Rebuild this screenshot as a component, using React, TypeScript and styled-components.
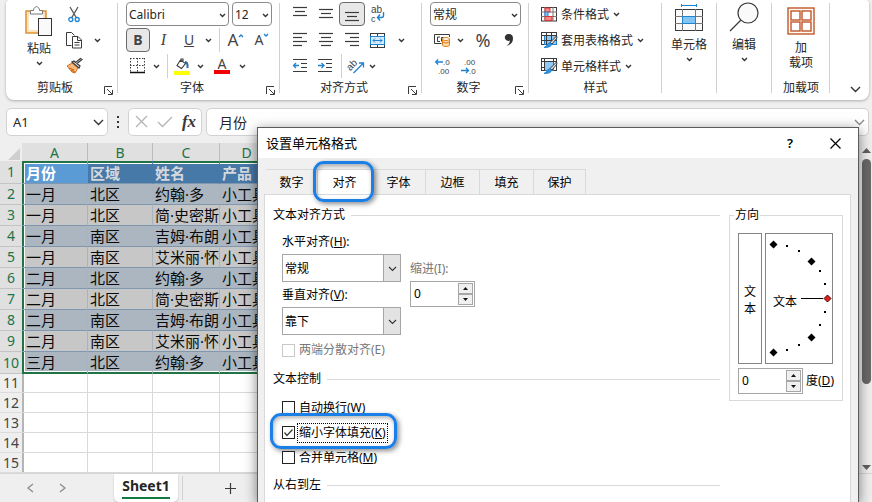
import React from "react";
import styled, { createGlobalStyle, css } from "styled-components";

const Global = createGlobalStyle`
  * { box-sizing: border-box; }
  html, body { margin: 0; height: 100%; }
  body, button, input, select {
    font-family: "Noto Sans", "Noto Sans CJK SC", sans-serif;
    font-size: 12px;
    color: #262626;
  }
  button { background: none; border: 0; padding: 0; }
  svg { display: block; flex: none; overflow: visible; }
`;

const Window = styled.div`
  position: relative;
  min-height: 100vh;
  background: #efefef;
  overflow: hidden;
  display: flex;
  flex-direction: column;
`;

/* ---------- ribbon ---------- */

const Ribbon = styled.header`
  display: flex;
  height: 100px;
  margin: 0 3px 0 6px;
  background: #fff;
  border-radius: 4px 4px 8px 8px;
  box-shadow: 0 1px 3px rgba(0, 0, 0, 0.28);
`;

const Group = styled.section<{ $width: number; $pad?: number }>`
  display: flex;
  flex-direction: column;
  flex: none;
  width: ${(p) => p.$width}px;
  padding: 1px 0 0 ${(p) => p.$pad ?? 0}px;
  position: relative;
  &::after {
    content: "";
    position: absolute;
    right: 0;
    top: 3px;
    bottom: 7px;
    width: 1px;
    background: #d0d0d0;
  }
`;

const GroupBody = styled.div`
  display: flex;
  height: 78px;
`;

const Rows = styled.div`
  display: flex;
  flex-direction: column;
`;

const Row = styled.div`
  display: flex;
  align-items: center;
  height: 26px;
`;

const GroupFooter = styled.div<{ $outdent?: number }>`
  display: flex;
  align-items: center;
  height: 18px;
  margin-left: -${(p) => p.$outdent ?? 0}px;
`;

const GroupName = styled.span`
  flex: 1;
  text-align: center;
  line-height: 18px;
`;

const Launcher = styled.button`
  width: 14px;
  height: 14px;
  display: flex;
  align-items: flex-end;
`;

const Tool = styled.button<{ $w: number; $active?: boolean }>`
  display: flex;
  align-items: center;
  justify-content: center;
  width: ${(p) => p.$w}px;
  height: 24px;
  ${(p) =>
    p.$active &&
    css`
      background: #e8e8e8;
      border: 1px solid #6b6b6b;
      border-radius: 4px;
    `}
`;

const Glyph = styled.span<{ $size: number; $bold?: boolean }>`
  font-size: ${(p) => p.$size}px;
  line-height: 20px;
  font-weight: ${(p) => (p.$bold ? 700 : 400)};
  color: #444;
`;

const Italic = styled(Glyph)`
  font-family: "Liberation Serif", serif;
  font-style: italic;
`;

const Divider = styled.i`
  width: 1px;
  height: 24px;
  margin: 0 4px;
  background: #d0d0d0;
`;

const BigTool = styled.button<{ $w: number }>`
  display: flex;
  flex-direction: column;
  align-items: center;
  width: ${(p) => p.$w}px;
  line-height: 15px;
`;

const BigIcon = styled.span<{ $h: number }>`
  display: flex;
  align-items: flex-end;
  height: ${(p) => p.$h}px;
  margin-bottom: 5px;
`;

const BigChevron = styled.span`
  display: flex;
  height: 14px;
  align-items: center;
`;

const StyleTool = styled.button`
  display: flex;
  align-items: center;
  gap: 4px;
  height: 26px;
  padding-left: 12px;
`;

const Tail = styled.div`
  flex: 1;
  display: flex;
  align-items: flex-end;
  justify-content: flex-end;
  padding: 0 8px 8px 0;
`;

const ComboBox = styled.div<{ $w: number; $gap?: number }>`
  position: relative;
  width: ${(p) => p.$w}px;
  margin-right: ${(p) => p.$gap ?? 0}px;
  select {
    appearance: none;
    display: block;
    width: 100%;
    height: 24px;
    padding: 0 2px;
    background: #fff;
    border: 1px solid #8a8a8a;
    border-radius: 4px;
  }
  svg {
    position: absolute;
    right: 3px;
    top: 10px;
    pointer-events: none;
  }
`;

/* ---------- formula bar ---------- */

const FormulaBar = styled.div`
  display: flex;
  align-items: center;
  height: 43px;
  padding: 0 3px 0 6px;
`;

const BarBox = styled.div<{ $w?: number }>`
  display: flex;
  align-items: center;
  ${(p) => (p.$w ? `flex: none; width: ${p.$w}px;` : "flex: 1; margin-left: 4px;")}
  height: 28px;
  background: #fff;
  border: 1px solid #d2d2d2;
  border-radius: 5px;
`;

const BarInput = styled.input<{ $size: number; $pad: number }>`
  flex: 1;
  min-width: 0;
  height: 24px;
  padding: 0 0 0 ${(p) => p.$pad}px;
  border: 0;
  background: none;
  outline: 0;
  font-size: ${(p) => p.$size}px;
`;

const Grip = styled.span`
  display: flex;
  justify-content: center;
  width: 20px;
`;

const Fx = styled.span`
  font: italic 700 17px/20px "Liberation Serif", serif;
  color: #3a3a3a;
`;

/* ---------- sheet ---------- */

const SheetArea = styled.main`
  display: flex;
  flex: 1;
`;

const Grid = styled.table`
  flex: 1;
  width: 100%;
  table-layout: fixed;
  border-collapse: separate;
  border-spacing: 0;
  background: #fff;
  td,
  th {
    padding: 0;
    overflow: hidden;
    white-space: nowrap;
  }
`;

const Col = styled.col<{ $w?: number }>`
  width: ${(p) => (p.$w ? `${p.$w}px` : "auto")};
`;

const Corner = styled.th`
  height: 18px;
  background: #efefef;
  svg { margin: 4px 0 0 8px; }
`;

const ColHead = styled.th`
  height: 18px;
  background: #e0e0e0;
  border-right: 1px solid #bcbcbc;
  color: #217346;
  font-size: 14px;
  font-weight: 400;
  line-height: 17px;
`;

const RowHead = styled.th<{ $sel?: boolean; $h: number }>`
  height: ${(p) => p.$h}px;
  background: ${(p) => (p.$sel ? "#e0e0e0" : "#efefef")};
  color: ${(p) => (p.$sel ? "#217346" : "#444")};
  border-bottom: 1px solid ${(p) => (p.$sel ? "#c4c4c4" : "#dcdcdc")};
  font-size: 14px;
  font-weight: 400;
  line-height: 18px;
`;

const DataCell = styled.td<{ $shade: string; $first: boolean; $top: boolean; $end: boolean }>`
  background: ${(p) => p.$shade};
  border-bottom: 1px solid ${(p) => (p.$end ? "#217346" : "#7f98b0")};
  border-right: 1px solid ${(p) => (p.$top ? p.$shade : "#a9b4bf")};
  color: ${(p) => (p.$top ? (p.$first ? "#fff" : "#d5d8dc") : "#0a0a0a")};
  font-size: 15px;
  font-weight: ${(p) => (p.$top ? 700 : 400)};
  line-height: 19px;
  && {
    padding-left: ${(p) => (p.$first ? 4 : 2)}px;
    padding-top: ${(p) => (p.$top ? 2 : 0)}px;
  }
  box-shadow: ${(p) =>
    [
      p.$first && "inset 2px 0 #217346",
      p.$top && "inset 0 2px #217346",
      p.$end && "inset 0 -1px #217346",
      p.$first && "inset 3px 0 #fff",
      p.$top && "inset 0 3px #fff",
      p.$end && "inset 0 -2px #fff",
    ]
      .filter(Boolean)
      .join(", ") || "none"};
`;

const EmptyCell = styled.td<{ $first: boolean }>`
  border-right: 1px solid #d9d9d9;
  border-bottom: 1px solid #d9d9d9;
  box-shadow: ${(p) => (p.$first ? "inset 2px 0 #b5b5b5" : "none")};
`;

const ScrollTrack = styled.div`
  display: flex;
  flex-direction: column;
  align-items: center;
  width: 13px;
  padding: 5px 0 3px 1px;
`;

const ScrollThumb = styled.div`
  width: 9px;
  height: 225px;
  margin: 6px 0 auto;
  border-radius: 5px;
  background: #686868;
`;

const SheetBar = styled.nav`
  display: flex;
  align-items: center;
  height: 29px;
  padding-left: 14px;
  border-top: 1px solid #d6d6d6;
`;

const SheetTab = styled.button`
  display: flex;
  align-self: flex-start;
  justify-content: center;
  width: 64px;
  height: 28px;
  margin: 0 0 0 36px;
  background: #fff;
  border-radius: 0 0 5px 5px;
  box-shadow: 0 1px 2px rgba(0, 0, 0, 0.2);
  span {
    height: 25px;
    line-height: 24px;
    font-size: 14px;
    font-weight: 700;
    border-bottom: 2px solid #107c41;
  }
`;

/* ---------- dialog ---------- */

const Dialog = styled.div`
  position: absolute;
  top: 127px;
  left: 257px;
  right: 13px;
  bottom: 0;
  display: flex;
  flex-direction: column;
  background: #f0f0f0;
  border: 1px solid #5c5c5c;
  border-bottom: 0;
  box-shadow: 0 3px 12px rgba(0, 0, 0, 0.5);
  color: #000;
  select, input { color: #000; }
`;

const TitleBar = styled.div`
  display: flex;
  align-items: center;
  flex: none;
  height: 30px;
  padding: 0 16px 0 8px;
  background: #fff;
  h1 { flex: 1; margin: 0; font-size: 13px; font-weight: 400; line-height: 20px; }
`;

const TitleButton = styled.button`
  display: flex;
  align-items: center;
  justify-content: center;
  width: 14px;
  height: 20px;
  margin-left: 31px;
  font-size: 13px;
  font-weight: 600;
  color: #000;
`;

const Tabs = styled.div`
  display: flex;
  flex: none;
  margin: 11px 0 0 8px;
`;

const Tab = styled.button<{ $active?: boolean }>`
  position: relative;
  width: 54px;
  height: 25px;
  line-height: 25px;
  color: #000;
  border-top: 1px solid #d9d9d9;
  border-right: 1px solid #d9d9d9;
  &:first-child,
  &:last-child { width: 52px; }
  ${(p) => p.$active && css`background: #fff;`}
`;

const ring = css`
  content: "";
  position: absolute;
  border: 3px solid #1a7fe6;
  border-radius: 11px;
  box-shadow: 2px 2px 5px rgba(0, 0, 0, 0.45), inset 1px 2px 4px rgba(0, 0, 0, 0.3);
  pointer-events: none;
`;

const RingedTab = styled(Tab)`
  z-index: 1;
  &::after {
    ${ring}
    inset: -9px -3px -8px -5px;
  }
`;

const Panel = styled.div`
  display: flex;
  flex: 1;
  min-height: 0;
  gap: 9px;
  margin: 0 7px 0 6px;
  padding: 10px 7px 0 8px;
  background: #fff;
  border: 1px solid #d9d9d9;
  border-bottom: 0;
`;

const Settings = styled.div`
  flex: 1;
`;

const SectionTitle = styled.h2`
  display: flex;
  align-items: center;
  gap: 6px;
  height: 20px;
  margin: 0;
  font-size: 12px;
  font-weight: 400;
  line-height: 20px;
  &::after { content: ""; flex: 1; height: 1px; background: #d9d9d9; }
`;

const AlignFields = styled.div`
  display: flex;
  gap: 9px;
  padding: 7px 0 0 9px;
`;

const Stack = styled.div<{ $top?: number }>`
  display: flex;
  flex-direction: column;
  gap: 3px;
  padding-top: ${(p) => p.$top ?? 0}px;
`;

const Field = styled.div`
  display: flex;
  flex-direction: column;
  gap: 2px;
`;

const FieldLabel = styled.label<{ $dim?: boolean }>`
  line-height: 20px;
  color: ${(p) => (p.$dim ? "#777" : "#000")};
`;

const Drop = styled.div`
  position: relative;
  width: 119px;
  select {
    appearance: none;
    display: block;
    width: 100%;
    height: 28px;
    padding: 0 2px;
    border: 1px solid #a6a6a6;
    border-radius: 0;
    background: #fff;
  }
  span {
    position: absolute;
    top: 1px;
    right: 1px;
    bottom: 1px;
    width: 17px;
    display: flex;
    align-items: center;
    justify-content: center;
    background: #e3e3e3;
    border-left: 1px solid #a6a6a6;
    pointer-events: none;
  }
`;

const SpinBox = styled.div`
  display: flex;
  width: 65px;
  height: 26px;
  padding: 1px;
  border: 1px solid #a6a6a6;
  background: #fff;
  input {
    flex: 1;
    min-width: 0;
    padding: 0 2px;
    border: 0;
    outline: 0;
    height: 20px;
  }
`;

const SpinButtons = styled.div`
  display: flex;
  flex-direction: column;
  width: 15px;
  button {
    flex: 1;
    display: flex;
    align-items: center;
    justify-content: center;
    background: #f0f0f0;
    border: 1px solid #a6a6a6;
  }
`;

const CheckRow = styled.label<{ $dim?: boolean; $h: number }>`
  position: relative;
  display: flex;
  align-items: center;
  width: max-content;
  height: ${(p) => p.$h}px;
  color: ${(p) => (p.$dim ? "#777" : "#000")};
  input {
    appearance: none;
    width: 13px;
    height: 13px;
    margin: 0 2px 0 0;
    border: 1px solid ${(p) => (p.$dim ? "#c8c8c8" : "#222")};
    background: #fff;
  }
  svg { position: absolute; left: 2px; }
`;

const RingedCheck = styled(CheckRow)`
  &::after {
    ${ring}
    inset: -7px -9px -4px -12px;
  }
`;

const CheckText = styled.span<{ $focus?: boolean }>`
  line-height: 18px;
  padding: 0 1px;
  border: 1px dotted ${(p) => (p.$focus ? "#000" : "transparent")};
`;

const CheckList = styled.div`
  padding: 6px 0 5px 9px;
`;

const DistributeSlot = styled.div`
  margin: 5px 0 9px;
  padding-left: 9px;
`;

const Orientation = styled.fieldset`
  width: 114px;
  height: 196px;
  margin: 0;
  min-width: 0;
  padding: 8px 8px 0;
  border: 1px solid #d9d9d9;
  align-self: flex-start;
  legend {
    margin-left: -4px;
    padding: 0 1px;
    line-height: 20px;
  }
`;

const DialRow = styled.div`
  display: flex;
  gap: 3px;
`;

const Vertical = styled.button`
  display: flex;
  flex-direction: column;
  align-items: center;
  justify-content: center;
  width: 24px;
  height: 131px;
  padding-top: 2px;
  border: 1px solid #858585;
  line-height: 17px;
  color: #000;
`;

const Dial = styled.div`
  width: 68px;
  height: 131px;
  border: 1px solid #858585;
`;

const DegreeRow = styled.div`
  display: flex;
  align-items: center;
  gap: 3px;
  margin-top: 4px;
`;

/* ---------- icons ---------- */

const dark = "#3b3b3b";
const blue = "#1f83cf";

const Chevron = ({ w = 7, color = "#333", s = 1.4 }: { w?: number; color?: string; s?: number }) => (
  <svg width={w} height={w / 2 + 2} viewBox={`0 -1 ${w} ${w / 2 + 2}`} fill="none" stroke={color} strokeWidth={s}>
    <path d={`M1 1L${w / 2} ${w / 2}L${w - 1} 1`} />
  </svg>
);

const Draw = ({ w, h, children }: { w: number; h: number; children: React.ReactNode }) => (
  <svg width={w} height={h} viewBox={`0 0 ${w} ${h}`} fill="none" stroke={dark} strokeWidth="1">
    {children}
  </svg>
);

const LaunchIcon = () => (
  <Draw w={9} h={9}>
    <path d="M.5 8V.5H8M3 3L8 8M8.5 4V8.5H4" />
  </Draw>
);

const PasteIcon = () => (
  <Draw w={28} h={30}>
    <rect x="1" y="5" width="20" height="22" fill="#fbe3bd" stroke="#dc9136" strokeWidth="1.5" />
    <rect x="4" y="8" width="14" height="16" fill="#fff" stroke="none" />
    <path d="M5.5 8V4.5H8.5C8.5 -.5 14.5 -.5 14.5 4.5H17.5V8Z" fill="#fff" stroke="#777" />
    <rect x="13.5" y="12.500" width="13" height="17" fill="#fafafa" stroke="#333" />
  </Draw>
);

const CutIcon = () => (
  <Draw w={12} h={17}>
    <path d="M2 1L8.5 12M10 1L3.5 12" strokeWidth="1.3" stroke="#555" />
    <circle cx="2.8" cy="13.5" r="2" stroke={blue} strokeWidth="1.3" />
    <circle cx="9.2" cy="13.5" r="2" stroke={blue} strokeWidth="1.3" />
  </Draw>
);

const CopyIcon = () => (
  <Draw w={17} h={17}>
    <path d="M5.5 13.5H.5V.5H5.500L8.500 3.500" />
    <path d="M6.5 4.5H12L15.5 8V16H6.5ZM11.5 4.5V8.5H15.5M8.5 10.5H13.5M8.5 13H13.5" fill="#fff" />
  </Draw>
);

const BrushIcon = () => (
  <Draw w={17} h={16}>
    <path d="M1 8L6 5L12 10L9 15L6 14Z" fill="#f8b878" stroke="#d9701c" />
    <path d="M3 10L8 12M5 12L9 14" stroke="#c95f0c" />
    <path d="M6 4L13 10L14 8L11 5.5L16 1.5L14.5 .5L9.5 4.5L8 3Z" fill="#eee" strokeWidth="1.2" />
  </Draw>
);

const BorderIcon = () => (
  <Draw w={16} h={16}>
    <path d="M.5 0V14M7.5 0V14M14.5 0V14M0 .5H15M0 7.5H15" strokeDasharray="1.5 1.5" />
    <path d="M0 14.5H15" strokeWidth="1.5" stroke="#111" />
  </Draw>
);

const BucketIcon = () => (
  <Draw w={17} h={17}>
    <path d="M6.500 2L3 7.500L7.500 10.500L11.500 5.500L6.500 2M9 5V1H7V4" strokeWidth="1.1" />
    <path d="M11 4Q14 4 13.500 10" stroke="#2a6ca8" strokeWidth="2" />
    <rect x="0" y="13" width="16" height="4" fill="#ffff00" stroke="none" />
  </Draw>
);

const FontColorBar = styled.span`
  display: flex;
  flex-direction: column;
  align-items: center;
  width: 16px;
  line-height: 12px;
  font-size: 14px;
  color: #444;
  border-bottom: 4px solid #f00000;
`;

const Lines = ({ rows, w = 14, h = 14 }: { rows: [number, number, number][]; w?: number; h?: number }) => (
  <Draw w={w} h={h}>
    {rows.map(([x, y, len]) => (
      <path key={y} d={`M${x} ${y + 0.5}h${len}`} strokeWidth="1.2" />
    ))}
  </Draw>
);

const IndentIcon = ({ into }: { into?: boolean }) => (
  <Draw w={14} h={14}>
    <path d="M0 .5H14M8 4.500H14M8 8.500H14M0 12.500H14" strokeWidth="1.2" />
    <path d={into ? "M0 6.500H6M3.500 4L6 6.500L3.500 9" : "M6 6.500H.5M3 4L.5 6.500L3 9"} stroke={blue} strokeWidth="1.3" />
  </Draw>
);

const svgText = { fontFamily: '"Liberation Sans", sans-serif', stroke: "none", fill: "#444" };

const WrapIcon = () => (
  <Draw w={16} h={18}>
    <text x="1" y="8" fontSize="10" {...svgText}>ab</text>
    <text x="1" y="17" fontSize="9" {...svgText}>c</text>
    <path d="M13.500 7V10.5Q13.500 12.5 11.500 12.500H7.5M10 9.500L7.5 12.5L10 15.5" stroke={blue} strokeWidth="1.4" />
  </Draw>
);

const MergeIcon = () => (
  <Draw w={16} h={15}>
    <rect x=".5" y=".5" width="14" height="14" />
    <path d="M7.5 0V3M7.5 12V15" />
    <rect x=".5" y="3.5" width="14" height="8" fill="#d5ebfb" stroke={blue} />
    <path d="M3 7.5H12M5 5.5L3 7.5L5 9.5M10 5.5L12 7.5L10 9.5" stroke={blue} />
  </Draw>
);

const OrientIcon = () => (
  <Draw w={17} h={16}>
    <text x="0" y="10" fontSize="10" transform="rotate(-45 5 9)" {...svgText}>ab</text>
    <path d="M5.5 15L15 5.5M11 5H15.5V9.5" stroke={blue} strokeWidth="1.3" />
  </Draw>
);

const CurrencyIcon = () => (
  <Draw w={17} h={14}>
    <path d="M7.500 10.5H.5V1.5H15.5V4M6 4H3.5V8.5H6M7.500 8.500V4.500H9.500" />
    <path d="M8.5 6V12C8.5 14 15.5 14 15.5 12V6" fill="#fbd9a5" stroke="#e08018" />
    <path d="M8.5 9Q12 11 15.5 9" stroke="#e08018" />
    <ellipse cx="12" cy="6" rx="3.5" ry="1.5" fill="#fff" stroke="#e08018" />
  </Draw>
);

const DecimalIcon = ({ less }: { less?: boolean }) => (
  <Draw w={16} h={18}>
    <text x={less ? 3 : 8} y="8" fontSize="8" {...svgText}>{less ? ".00" : ".0"}</text>
    <text x={less ? 8 : 3} y="17" fontSize="8" {...svgText}>{less ? ".0" : ".00"}</text>
    <path
      d={less ? "M0 13.500H7.5M5 11L7.5 13.5L5 16" : "M8 5H.7M3.2 2.5L.7 5L3.2 7.5"}
      stroke={blue}
      strokeWidth="1.3"
    />
  </Draw>
);

const CondIcon = () => (
  <Draw w={16} h={15}>
    <rect x=".5" y=".5" width="15" height="13.5" />
    <path d="M4 0V14M12 0V14M0 5H16M0 9.5H16" stroke="#777" />
    <rect x="4" y="1" width="5" height="4" fill="#f58a8a" stroke="#d33" />
    <rect x="4" y="5" width="3" height="4.5" fill="#86c3f2" stroke={blue} />
    <rect x="4" y="9.5" width="7" height="4" fill="#f58a8a" stroke="#d33" />
  </Draw>
);

const TableStyleIcon = ({ cell }: { cell?: boolean }) => (
  <Draw w={16} h={16}>
    <rect x=".5" y=".5" width="15" height="12" fill="#fff" />
    <rect x="3.5" y="3.5" width={cell ? 9 : 12} height="9" fill="#90c9f5" stroke={blue} />
    <path d={cell ? "M3.5 0V13M12.5 0V4M0 3.5H16M0 9.5H4" : "M5.500 0V13M10.500 0V13M0 3.500H16M0 8.5H16"} />
    <path d="M15.5 4L9 10.5L11 12L16 6Z" fill="#ddd" />
    <path d="M3 15.5Q6 14.5 6.5 12Q9 9.5 10.5 12Q10.5 15.5 3 15.5Z" fill="#2f96df" stroke={blue} />
  </Draw>
);

const CellsIcon = () => (
  <Draw w={28} h={28}>
    <path d="M6 1.5H21M6.5 0V3M21.500 0V3" stroke={blue} />
    <rect x=".5" y="5.5" width="27" height="21" fill="#fafafa" />
    <path d="M7.5 5V27M20.5 5V27M0 12.5H28M0 19.5H28" stroke="#777" />
    <rect x="7.5" y="12.5" width="13" height="7" fill="#83c4f4" stroke={blue} />
  </Draw>
);

const FindIcon = () => (
  <Draw w={30} h={30}>
    <circle cx="19" cy="11" r="10" fill="#fafafa" strokeWidth="1.2" />
    <path d="M12 18L1 29" strokeWidth="1.3" />
  </Draw>
);

const AddinIcon = () => (
  <Draw w={28} h={28}>
    <rect x="1" y="1" width="26" height="26" fill="#fffaf2" stroke="#c2562b" strokeWidth="1.4" />
    {[[4, 4], [15, 4], [4, 15], [15, 15]].map(([x, y]) => (
      <rect key={`${x}-${y}`} x={x} y={y} width="9" height="9" fill="#fff" stroke="#c2562b" strokeWidth="1.4" />
    ))}
  </Draw>
);

const Triangle = ({ down, w = 5, color = "#111" }: { down?: boolean; w?: number; color?: string }) => {
  const h = Math.ceil(w / 2);
  return (
    <svg width={w} height={h} viewBox={`0 0 ${w} ${h}`} fill={color}>
      <path d={down ? `M0 0H${w}L${w / 2} ${h}Z` : `M0 ${h}H${w}L${w / 2} 0Z`} />
    </svg>
  );
};

/* ---------- composed parts ---------- */

const Combo = ({ label, value, w, gap }: { label: string; value: string; w: number; gap?: number }) => (
  <ComboBox $w={w} $gap={gap}>
    <select aria-label={label} defaultValue={value}>
      <option>{value}</option>
    </select>
    <Chevron />
  </ComboBox>
);

const Arrow = ({ w, label }: { w: number; label: string }) => (
  <Tool $w={w} aria-label={label}>
    <Chevron />
  </Tool>
);

const Footer = ({ name, pad, launch = true }: { name: string; pad?: number; launch?: boolean }) => (
  <GroupFooter $outdent={pad}>
    <GroupName>{name}</GroupName>
    {launch && (
      <Launcher aria-label={`${name}设置`}>
        <LaunchIcon />
      </Launcher>
    )}
  </GroupFooter>
);

const Spin = ({ id }: { id: string }) => (
  <SpinBox>
    <input id={id} type="text" inputMode="numeric" defaultValue="0" />
    <SpinButtons>
      <button aria-label="增加"><Triangle /></button>
      <button aria-label="减少"><Triangle down /></button>
    </SpinButtons>
  </SpinBox>
);

const DropField = ({ id, label, hotkey, value }: { id: string; label: string; hotkey: string; value: string }) => (
  <Field>
    <FieldLabel htmlFor={id}>{label}(<u>{hotkey}</u>):</FieldLabel>
    <Drop>
      <select id={id} defaultValue={value}><option>{value}</option></select>
      <span><Chevron w={9} s={1.1} /></span>
    </Drop>
  </Field>
);

const table = [
  ["月份", "区域", "姓名", "产品"],
  ["一月", "北区", "约翰·多", "小工具"],
  ["一月", "北区", "简·史密斯", "小工具"],
  ["一月", "南区", "吉姆·布朗", "小工具"],
  ["一月", "南区", "艾米丽·怀特", "小工具"],
  ["二月", "北区", "约翰·多", "小工具"],
  ["二月", "北区", "简·史密斯", "小工具"],
  ["二月", "南区", "吉姆·布朗", "小工具"],
  ["二月", "南区", "艾米丽·怀特", "小工具"],
  ["三月", "北区", "约翰·多", "小工具"],
];

const shade = (r: number, c: number) => {
  if (r === 0) return c === 0 ? "#5b9bd5" : "#4678a8";
  return r % 2 ? "#acb6c1" : "#c7c7c7";
};

const largeDots = [[8, 11], [46, 28], [46, 104], [8, 119]];
const smallDots = [[22, 13], [34, 18], [55, 38], [60, 51], [60, 79], [55, 92], [34, 112], [22, 117]];

export default function App() {
  return (
    <Window>
      <Global />
      <Ribbon>
        <Group $width={112} $pad={10}>
          <GroupBody>
            <BigTool $w={46}>
              <BigIcon $h={35}><PasteIcon /></BigIcon>
              粘贴
              <BigChevron><Chevron /></BigChevron>
            </BigTool>
            <Rows>
              <Row><Tool $w={24} aria-label="剪切"><CutIcon /></Tool></Row>
              <Row>
                <Tool $w={24} aria-label="复制"><CopyIcon /></Tool>
                <Arrow w={22} label="复制选项" />
              </Row>
              <Row><Tool $w={24} aria-label="格式刷"><BrushIcon /></Tool></Row>
            </Rows>
          </GroupBody>
          <Footer name="剪贴板" pad={10} />
        </Group>

        <Group $width={162} $pad={8}>
          <Rows>
            <Row>
              <Combo label="字体名称" value="Calibri" w={103} gap={3} />
              <Combo label="字号" value="12" w={40} />
            </Row>
            <Row>
              <Tool $w={24} $active><Glyph $size={14} $bold>B</Glyph></Tool>
              <Tool $w={27}><Italic $size={16}>I</Italic></Tool>
              <Tool $w={24}><Glyph $size={14}><u>U</u></Glyph></Tool>
              <Arrow w={14} label="下划线选项" />
              <Divider />
              <Tool $w={24} aria-label="增大字号">
                <Glyph $size={17}>A</Glyph>
                <Draw w={6} h={14}><path d="M1 4L3 2L5 4" stroke={blue} strokeWidth="1.3" /></Draw>
              </Tool>
              <Tool $w={28} aria-label="减小字号">
                <Glyph $size={14}>A</Glyph>
                <Draw w={6} h={14}><path d="M1 1L3 3L5 1" stroke={blue} strokeWidth="1.3" /></Draw>
              </Tool>
            </Row>
            <Row>
              <Tool $w={24} aria-label="边框"><BorderIcon /></Tool>
              <Arrow w={13} label="边框选项" />
              <Divider />
              <Tool $w={20} aria-label="填充颜色"><BucketIcon /></Tool>
              <Arrow w={16} label="填充颜色选项" />
              <Tool $w={28}><FontColorBar>A</FontColorBar></Tool>
              <Arrow w={12} label="字体颜色选项" />
            </Row>
          </Rows>
          <Footer name="字体" pad={8} />
        </Group>

        <Group $width={142} $pad={7}>
          <Rows>
            <Row>
              <Tool $w={26} aria-label="顶端对齐"><Lines rows={[[0, 0, 14], [2, 4, 10], [0, 8, 14]]} /></Tool>
              <Tool $w={26} aria-label="垂直居中"><Lines rows={[[0, 2, 14], [2, 6, 10], [0, 10, 14]]} /></Tool>
              <Tool $w={26} $active aria-label="底端对齐"><Lines rows={[[0, 6, 14], [2, 10, 10], [0, 14, 14]]} h={16} /></Tool>
              <Tool $w={26} aria-label="自动换行"><WrapIcon /></Tool>
            </Row>
            <Row>
              <Tool $w={26} aria-label="左对齐"><Lines rows={[[0, 0, 14], [0, 4, 9], [0, 8, 14], [0, 12, 9]]} /></Tool>
              <Tool $w={26} aria-label="居中"><Lines rows={[[0, 0, 14], [2, 4, 10], [0, 8, 14], [2, 12, 10]]} /></Tool>
              <Tool $w={26} aria-label="右对齐"><Lines rows={[[0, 0, 14], [5, 4, 9], [0, 8, 14], [5, 12, 9]]} /></Tool>
              <Tool $w={26} aria-label="合并居中"><MergeIcon /></Tool>
              <Arrow w={20} label="合并选项" />
            </Row>
            <Row>
              <Tool $w={26} aria-label="减少缩进"><IndentIcon /></Tool>
              <Tool $w={24} aria-label="增加缩进"><IndentIcon into /></Tool>
              <Divider />
              <Tool $w={20} aria-label="方向"><OrientIcon /></Tool>
              <Arrow w={13} label="方向选项" />
            </Row>
          </Rows>
          <Footer name="对齐方式" pad={7} />
        </Group>

        <Group $width={107} $pad={8}>
          <Rows>
            <Row><Combo label="数字格式" value="常规" w={91} /></Row>
            <Row>
              <Tool $w={24} aria-label="会计格式"><CurrencyIcon /></Tool>
              <Arrow w={13} label="会计格式选项" />
              <Tool $w={32}><Glyph $size={18}>%</Glyph></Tool>
              <Tool $w={20} aria-label="千位分隔">
                <Draw w={8} h={13}><path d="M4 0A3.500 3.500 0 1 0 5 6.5Q4.5 10 1.5 12Q8 10 8 4.500Q8 0 4 0Z" fill="#333" stroke="none" /></Draw>
              </Tool>
            </Row>
            <Row>
              <Tool $w={25} aria-label="增加小数位"><DecimalIcon /></Tool>
              <Tool $w={27} aria-label="减少小数位"><DecimalIcon less /></Tool>
            </Row>
          </Rows>
          <Footer name="数字" pad={8} />
        </Group>

        <Group $width={133}>
          <Rows>
            <StyleTool><CondIcon />条件格式<Chevron /></StyleTool>
            <StyleTool><TableStyleIcon />套用表格格式<Chevron /></StyleTool>
            <StyleTool><TableStyleIcon cell />单元格样式<Chevron /></StyleTool>
          </Rows>
          <Footer name="样式" launch={false} />
        </Group>

        <Group $width={55}>
          <BigTool $w={54}>
            <BigIcon $h={31}><CellsIcon /></BigIcon>
            单元格
            <BigChevron><Chevron /></BigChevron>
          </BigTool>
        </Group>
        <Group $width={55}>
          <BigTool $w={54}>
            <BigIcon $h={31}><FindIcon /></BigIcon>
            编辑
            <BigChevron><Chevron /></BigChevron>
          </BigTool>
        </Group>
        <Group $width={58}>
          <GroupBody>
            <BigTool $w={58}>
              <BigIcon $h={34}><AddinIcon /></BigIcon>
              <span>加<br />载项</span>
            </BigTool>
          </GroupBody>
          <Footer name="加载项" launch={false} />
        </Group>
        <Tail>
          <button aria-label="折叠功能区"><Chevron w={11} /></button>
        </Tail>
      </Ribbon>

      <FormulaBar>
        <BarBox $w={102}>
          <BarInput aria-label="名称框" defaultValue="A1" $size={13} $pad={6} />
          <Tool $w={18} aria-label="名称列表"><Chevron w={11} /></Tool>
        </BarBox>
        <Grip>
          <svg width="2" height="12" viewBox="0 0 2 12" fill="#333">
            <path d="M0 0h2v2H0zM0 5h2v2H0zM0 10h2v2H0z" />
          </svg>
        </Grip>
        <BarBox $w={74}>
          <Tool $w={24} aria-label="取消">
            <Draw w={13} h={13}><path d="M1 1L12 12M12 1L1 12" stroke="#b4b4b4" strokeWidth="1.3" /></Draw>
          </Tool>
          <Tool $w={24} aria-label="输入">
            <Draw w={16} h={12}><path d="M1 6L5.5 10.5L15 1" stroke="#b4b4b4" strokeWidth="1.3" /></Draw>
          </Tool>
          <Tool $w={24} aria-label="插入函数"><Fx>fx</Fx></Tool>
        </BarBox>
        <BarBox>
          <BarInput aria-label="编辑栏" defaultValue="月份" $size={14} $pad={12} />
          <Tool $w={18} aria-label="展开编辑栏"><Chevron w={11} color="#8a8a8a" /></Tool>
        </BarBox>
      </FormulaBar>

      <SheetArea>
        <Grid>
          <colgroup>
            <Col $w={22} />
            <Col $w={66} />
            <Col $w={65} />
            <Col $w={67} />
            <Col $w={54} />
            <Col />
          </colgroup>
          <thead>
            <tr>
              <Corner aria-label="全选">
                <svg width="12" height="12" viewBox="0 0 12 12" fill="#cfcfcf"><path d="M12 0V12H0Z" /></svg>
              </Corner>
              {["A", "B", "C", "D"].map((c) => <ColHead key={c} scope="col">{c}</ColHead>)}
              <ColHead aria-hidden />
            </tr>
          </thead>
          <tbody>
            {table.map((cells, r) => (
              <tr key={r}>
                <RowHead scope="row" $sel $h={r === 0 ? 23 : r === 9 ? 22 : 21}>{r + 1}</RowHead>
                {cells.map((text, c) => (
                  <DataCell key={c} $shade={shade(r, c)} $first={c === 0} $top={r === 0} $end={r === 9}>
                    {text}
                  </DataCell>
                ))}
                <td />
              </tr>
            ))}
            {[11, 12, 13, 14, 15].map((n) => (
              <tr key={n}>
                <RowHead scope="row" $h={n === 11 ? 19 : 20}>{n}</RowHead>
                {[0, 1, 2, 3].map((c) => <EmptyCell key={c} $first={c === 0} />)}
                <td />
              </tr>
            ))}
          </tbody>
        </Grid>
        <ScrollTrack>
          <Triangle w={9} color="#606060" />
          <ScrollThumb />
          <Triangle w={9} color="#606060" down />
        </ScrollTrack>
      </SheetArea>

      <SheetBar>
        <Tool $w={32} aria-label="上一个工作表">
          <Draw w={7} h={10}><path d="M6 1L1 5L6 9" stroke="#8c8c8c" strokeWidth="1.3" /></Draw>
        </Tool>
        <Tool $w={32} aria-label="下一个工作表">
          <Draw w={7} h={10}><path d="M1 1L6 5L1 9" stroke="#8c8c8c" strokeWidth="1.3" /></Draw>
        </Tool>
        <SheetTab><span>Sheet1</span></SheetTab>
        <Divider />
        <Tool $w={86} aria-label="新建工作表">
          <Draw w={11} h={11}><path d="M5.5 0V11M0 5.5H11" strokeWidth="1.2" /></Draw>
        </Tool>
      </SheetBar>

      <Dialog role="dialog" aria-labelledby="dialog-title">
        <TitleBar>
          <h1 id="dialog-title">设置单元格格式</h1>
          <TitleButton>?</TitleButton>
          <TitleButton aria-label="关闭">
            <Draw w={11} h={11}><path d="M.5 .5L10.5 10.5M10.5 .5L.5 10.5" stroke="#000" strokeWidth="1.2" /></Draw>
          </TitleButton>
        </TitleBar>
        <Tabs role="tablist">
          <Tab role="tab">数字</Tab>
          <RingedTab role="tab" aria-selected $active>对齐</RingedTab>
          <Tab role="tab">字体</Tab>
          <Tab role="tab">边框</Tab>
          <Tab role="tab">填充</Tab>
          <Tab role="tab">保护</Tab>
        </Tabs>
        <Panel>
          <Settings>
            <SectionTitle>文本对齐方式</SectionTitle>
            <AlignFields>
              <Stack>
                <DropField id="horizontal" label="水平对齐" hotkey="H" value="常规" />
                <DropField id="vertical" label="垂直对齐" hotkey="V" value="靠下" />
              </Stack>
              <Stack $top={27}>
                <Field>
                  <FieldLabel htmlFor="indent" $dim>缩进(I):</FieldLabel>
                  <Spin id="indent" />
                </Field>
              </Stack>
            </AlignFields>
            <DistributeSlot>
              <CheckRow $dim $h={20}>
                <input type="checkbox" disabled />
                <CheckText>两端分散对齐(E)</CheckText>
              </CheckRow>
            </DistributeSlot>
            <SectionTitle>文本控制</SectionTitle>
            <CheckList>
              <CheckRow $h={25}>
                <input type="checkbox" />
                <CheckText>自动换行(<u>W</u>)</CheckText>
              </CheckRow>
              <RingedCheck $h={25}>
                <input type="checkbox" defaultChecked />
                <Draw w={9} h={9}><path d="M.5 4.5L3 7.5L8.5 1.5" strokeWidth="1.3" /></Draw>
                <CheckText $focus>缩小字体填充(<u>K</u>)</CheckText>
              </RingedCheck>
              <CheckRow $h={25}>
                <input type="checkbox" />
                <CheckText>合并单元格(<u>M</u>)</CheckText>
              </CheckRow>
            </CheckList>
            <SectionTitle>从右到左</SectionTitle>
          </Settings>
          <Orientation>
            <legend>方向</legend>
            <DialRow>
              <Vertical aria-label="垂直文本"><span>文</span><span>本</span></Vertical>
              <Dial>
                <svg width="66" height="129" viewBox="1 1 66 129">
                  {largeDots.map(([x, y]) => (
                    <path key={`${x}-${y}`} d={`M${x - 3.5} ${y + 0.5}l4-4l4 4l-4 4z`} fill="#000" />
                  ))}
                  {smallDots.map(([x, y]) => (
                    <rect key={`${x}-${y}`} x={x - 1} y={y - 1} width="2" height="2" fill="#000" />
                  ))}
                  <path d="M36 65.5H58" stroke="#000" />
                  <path d="M59 65.5l3.5-3.5l3.5 3.5l-3.5 3.5z" fill="#d22" stroke="#500" />
                  <text x="8" y="73" fontSize="12" fontFamily='"Noto Sans CJK SC", sans-serif'>文本</text>
                </svg>
              </Dial>
            </DialRow>
            <DegreeRow>
              <Spin id="degrees" />
              <FieldLabel htmlFor="degrees">度(<u>D</u>)</FieldLabel>
            </DegreeRow>
          </Orientation>
        </Panel>
      </Dialog>
    </Window>
  );
}
